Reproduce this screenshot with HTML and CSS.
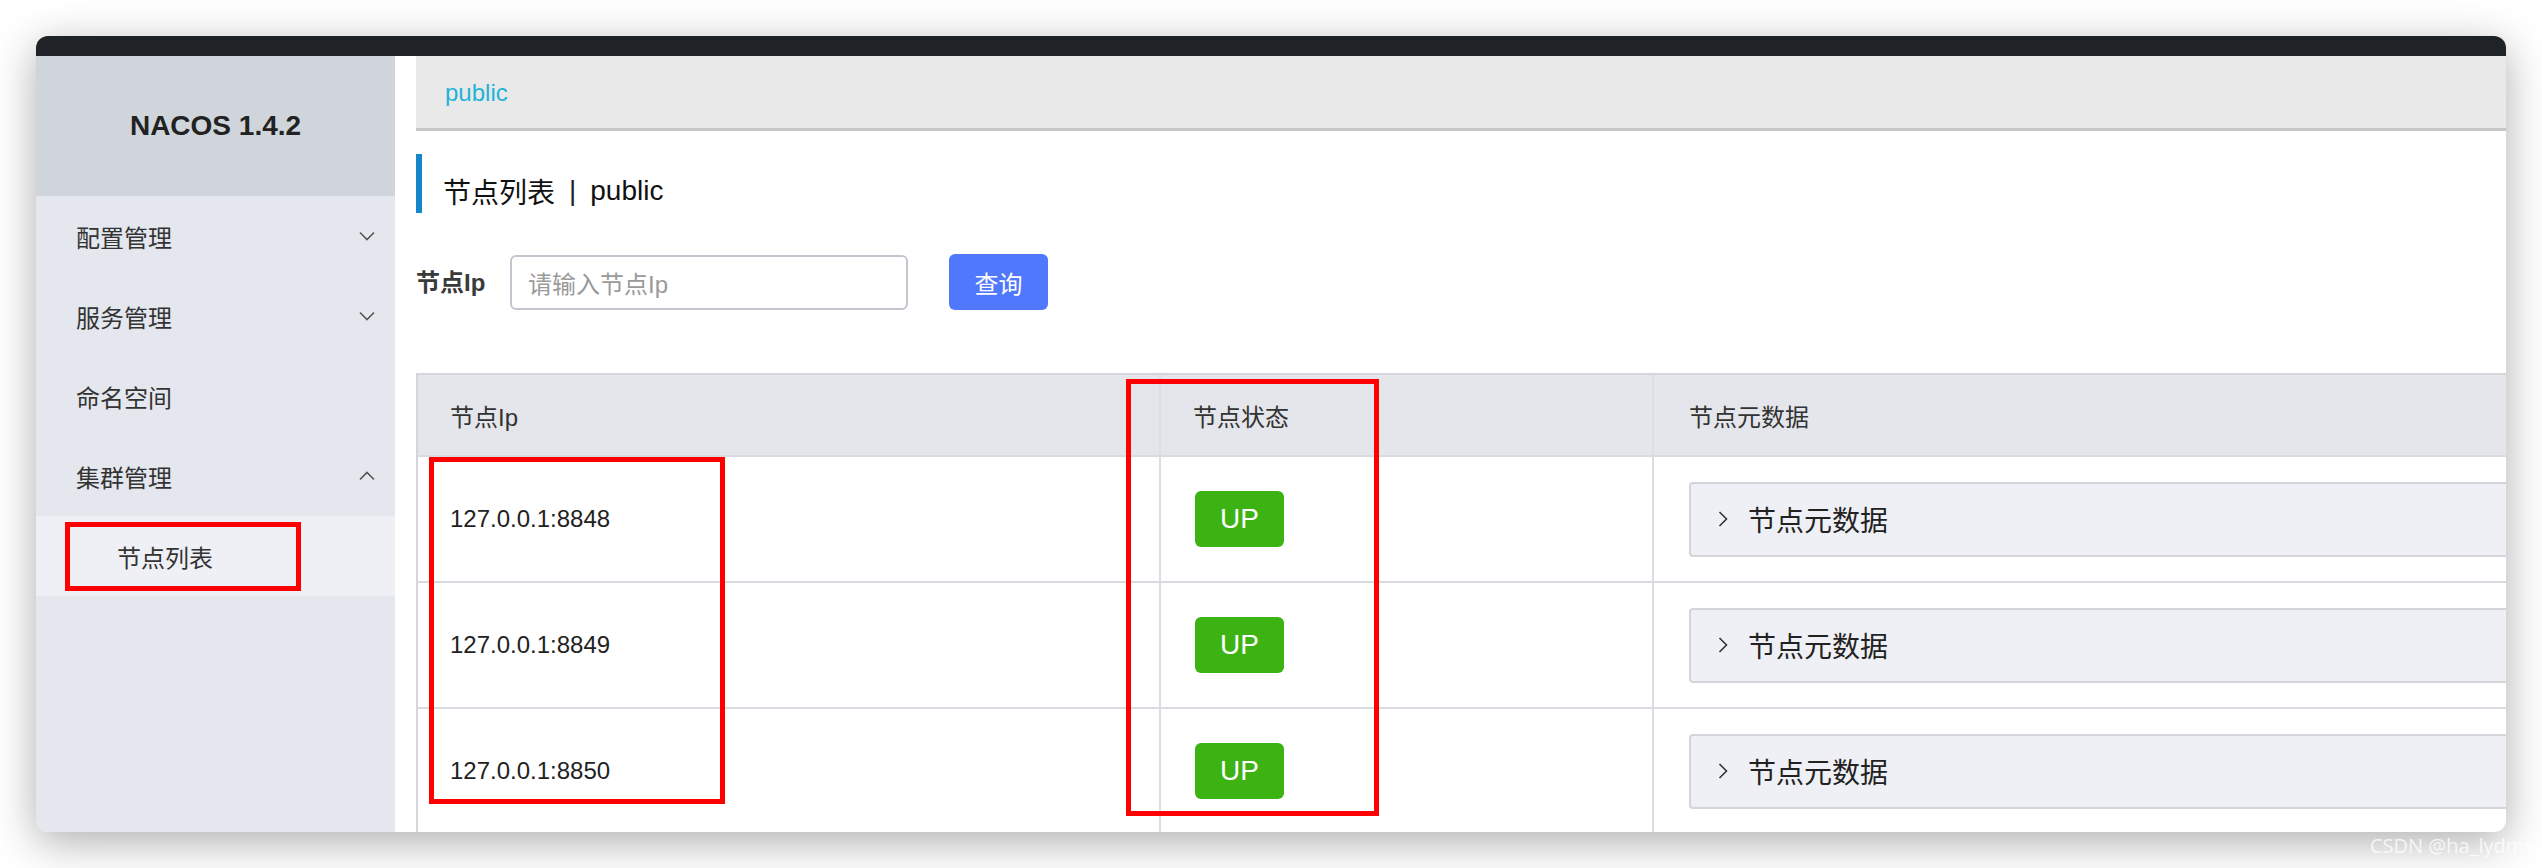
FILE: index.html
```html
<!DOCTYPE html>
<html lang="zh-CN">
<head>
<meta charset="utf-8">
<title>Nacos 节点列表</title>
<link rel="stylesheet" href="styles.css">
</head>
<body>
<div class="window">
  <div class="titlebar"></div>
  <div class="app">
    <aside class="sidebar">
      <div class="logo">NACOS 1.4.2</div>
      <nav class="menu">
        <div class="menu-item"><span>配置管理</span>
          <svg class="chev" width="16" height="10" viewBox="0 0 16 10"><path d="M1 1.5 L8 8.5 L15 1.5" fill="none" stroke="#555" stroke-width="1.6"/></svg>
        </div>
        <div class="menu-item"><span>服务管理</span>
          <svg class="chev" width="16" height="10" viewBox="0 0 16 10"><path d="M1 1.5 L8 8.5 L15 1.5" fill="none" stroke="#555" stroke-width="1.6"/></svg>
        </div>
        <div class="menu-item"><span>命名空间</span></div>
        <div class="menu-item"><span>集群管理</span>
          <svg class="chev" width="16" height="10" viewBox="0 0 16 10"><path d="M1 8.5 L8 1.5 L15 8.5" fill="none" stroke="#555" stroke-width="1.6"/></svg>
        </div>
        <div class="sub-item"><span>节点列表</span><div class="mark mark-menu"></div></div>
      </nav>
    </aside>
    <main class="content">
      <div class="crumb"><span class="crumb-link">public</span></div>
      <div class="page">
        <h1 class="title">节点列表 <span class="sep">|</span> public</h1>
        <div class="search">
          <label class="search-label">节点Ip</label>
          <div class="input"><span class="placeholder">请输入节点Ip</span></div>
          <button class="btn">查询</button>
        </div>
        <div class="table">
          <div class="row head">
            <div class="cell c1">节点Ip</div>
            <div class="cell c2">节点状态</div>
            <div class="cell c3">节点元数据</div>
          </div>
          <div class="row">
            <div class="cell c1">127.0.0.1:8848</div>
            <div class="cell c2"><span class="badge">UP</span></div>
            <div class="cell c3"><div class="panel"><svg class="pchev" width="10" height="16" viewBox="0 0 10 16"><path d="M1.5 1 L8.5 8 L1.5 15" fill="none" stroke="#333" stroke-width="1.6"/></svg><span>节点元数据</span></div></div>
          </div>
          <div class="row">
            <div class="cell c1">127.0.0.1:8849</div>
            <div class="cell c2"><span class="badge">UP</span></div>
            <div class="cell c3"><div class="panel"><svg class="pchev" width="10" height="16" viewBox="0 0 10 16"><path d="M1.5 1 L8.5 8 L1.5 15" fill="none" stroke="#333" stroke-width="1.6"/></svg><span>节点元数据</span></div></div>
          </div>
          <div class="row">
            <div class="cell c1">127.0.0.1:8850</div>
            <div class="cell c2"><span class="badge">UP</span></div>
            <div class="cell c3"><div class="panel"><svg class="pchev" width="10" height="16" viewBox="0 0 10 16"><path d="M1.5 1 L8.5 8 L1.5 15" fill="none" stroke="#333" stroke-width="1.6"/></svg><span>节点元数据</span></div></div>
          </div>
          <div class="mark mark-ip"></div>
          <div class="mark mark-status"></div>
        </div>
      </div>
    </main>
  </div>
</div>
<div class="watermark">CSDN @ha_lydms</div>
</body>
</html>
```
FILE: styles.css
```css
* { box-sizing: border-box; }
html, body { margin: 0; padding: 0; }
body {
  width: 2542px;
  height: 868px;
  background: #ffffff;
  font-family: "Liberation Sans", "Noto Sans CJK SC", sans-serif;
  color: #333;
  overflow: hidden;
  position: relative;
}
.window {
  margin: 36px 0 0 36px;
  width: 2470px;
  height: 796px;
  border-radius: 12px;
  overflow: hidden;
  background: #fff;
  box-shadow: 0 10px 44px rgba(0, 0, 0, 0.32);
  display: flex;
  flex-direction: column;
}
.titlebar {
  height: 20px;
  background: #1f2227;
  flex: none;
}
.app {
  flex: 1;
  display: flex;
  min-height: 0;
}
.sidebar {
  width: 359px;
  flex: none;
  background: #e4e7ed;
}
.logo {
  height: 140px;
  background: #d0d5dc;
  display: flex;
  align-items: center;
  justify-content: center;
  font-weight: bold;
  font-size: 28px;
  color: #222;
}
.menu-item {
  height: 80px;
  display: flex;
  align-items: center;
  justify-content: space-between;
  padding: 0 20px 0 40px;
  font-size: 24px;
  color: #333;
}
.chev { display: block; }
.sub-item {
  position: relative;
  height: 80px;
  background: #eef0f5;
  display: flex;
  align-items: center;
  padding-left: 81px;
  font-size: 24px;
  color: #333;
}
.mark {
  position: absolute;
  border: 5px solid #ff0000;
}
.mark-menu { left: 29px; top: 6px; width: 236px; height: 69px; }
.content {
  flex: 1;
  min-width: 0;
  padding-left: 21px;
  overflow: hidden;
}
.crumb {
  height: 75px;
  background: #e9e9e9;
  border-bottom: 3px solid #c6c6c6;
  display: flex;
  align-items: center;
  padding: 2px 0 0 29px;
}
.crumb-link {
  color: #1fb3d6;
  font-size: 24px;
}
.page { padding-top: 23px; }
.title {
  margin: 0;
  height: 59px;
  border-left: 6px solid #1785c9;
  padding: 14px 0 0 21px;
  display: flex;
  align-items: center;
  font-size: 28px;
  font-weight: normal;
  color: #111;
}
.sep { margin: 0 14px; font-weight: 300; color: #222; }
.search {
  margin-top: 41px;
  height: 56px;
  display: flex;
  align-items: center;
}
.search-label {
  width: 94px;
  font-size: 24px;
  font-weight: bold;
  color: #3a3a3a;
  margin-top: -3px;
}
.input {
  width: 398px;
  height: 55px;
  border: 2px solid #c4c6cf;
  border-radius: 6px;
  display: flex;
  align-items: center;
  padding-left: 16px;
}
.placeholder { font-size: 24px; color: #9a9a9a; }
.btn {
  margin-left: 41px;
  width: 99px;
  height: 56px;
  border: none;
  border-radius: 6px;
  background: #4f78fc;
  color: #fff;
  font-size: 24px;
  font-family: inherit;
  padding: 0;
}
.table {
  position: relative;
  margin-top: 63px;
  margin-right: -60px;
  border-top: 2px solid #d4d6dc;
  border-left: 2px solid #d4d6dc;
}
.row {
  display: flex;
  height: 126px;
  border-bottom: 2px solid #d9dbe0;
}
.row.head {
  height: 82px;
  background: #e4e6eb;
}
.cell {
  display: flex;
  align-items: center;
  font-size: 24px;
  color: #222;
}
.head .cell { color: #333; }
.c1 { width: 743px; padding-left: 32px; border-right: 2px solid #dcdee3; }
.c2 { width: 493px; padding-left: 34px; border-right: 2px solid #dcdee3; }
.head .c2 { padding-left: 32px; }
.c3 { flex: 1; padding-left: 35px; }
.head .c3 { padding-left: 35px; }
.badge {
  width: 89px;
  height: 56px;
  border-radius: 6px;
  background: #3cb313;
  color: #fff;
  font-size: 28px;
  display: flex;
  align-items: center;
  justify-content: center;
}
.panel {
  flex: 1;
  height: 75px;
  background: #eff0f5;
  border: 2px solid #d3d5db;
  border-radius: 4px;
  display: flex;
  align-items: center;
  padding-left: 27px;
  font-size: 28px;
  color: #222;
}
.pchev { margin-right: 20px; display: block; }
.mark-ip { left: 11px; top: 82px; width: 296px; height: 347px; }
.mark-status { left: 708px; top: 4px; width: 253px; height: 437px; }
.watermark {
  position: absolute;
  left: 2370px;
  top: 832px;
  font-family: "Open Sans", "Liberation Sans", sans-serif;
  font-size: 20px;
  color: rgba(255, 255, 255, 0.75);
}
```
